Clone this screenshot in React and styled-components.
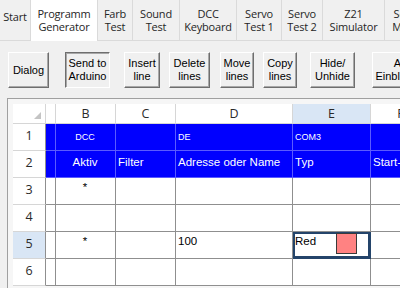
import React from "react";
import styled, { createGlobalStyle, css } from "styled-components";

const GlobalStyle = createGlobalStyle`
  html, body {
    margin: 0;
    padding: 0;
  }
  body {
    width: 400px;
    height: 288px;
    overflow: hidden;
    background: #f0f0f0;
    font-family: "Liberation Sans", Arial, sans-serif;
  }
`;

const Window = styled.div`
  width: 400px;
  height: 288px;
  overflow: hidden;
  display: flex;
  flex-direction: column;
`;

const TabBar = styled.div`
  display: flex;
  flex-shrink: 0;
  height: 40px;
  border-bottom: 1px solid #dadada;
  background: #f0f0f0;
`;

const Tab = styled.div`
  flex: 0 0 ${(p) => p.$w}px;
  box-sizing: border-box;
  height: ${(p) => (p.$active ? 41 : 40)}px;
  padding-top: ${(p) => (p.$single ? 10 : 7)}px;
  text-align: center;
  white-space: pre-line;
  font-family: "Open Sans", sans-serif;
  font-size: 11px;
  letter-spacing: -0.2px;
  line-height: 13px;
  color: #262626;
  border-right: 1px solid #dadada;
  background: ${(p) => (p.$active ? "#ffffff" : "#f0f0f0")};
`;

const Toolbar = styled.div`
  display: flex;
  align-items: flex-start;
  flex-shrink: 0;
  height: 57px;
  box-sizing: border-box;
  padding-top: 11px;
`;

const ToolButton = styled.button`
  flex: 0 0 ${(p) => p.$w}px;
  margin-left: ${(p) => p.$ml}px;
  height: 36px;
  padding: 0;
  box-sizing: border-box;
  white-space: pre-line;
  font-family: "Liberation Sans", Arial, sans-serif;
  font-size: 11px;
  line-height: 13px;
  color: #000;
  background: #f0f0f0;
  border: 1px solid;
  border-color: #ffffff #6e6e6e #6e6e6e #ffffff;
  box-shadow: inset -1px -1px 0 #a8a8a8;
  ${(p) =>
    p.$pressed &&
    css`
      border-color: #6e6e6e #ffffff #ffffff #6e6e6e;
      box-shadow: inset 1px 1px 0 #a8a8a8;
    `}
`;

const Sheet = styled.div`
  flex: 1;
  margin-left: 7px;
  padding: 5px 0 0 5px;
  border-top: 1px solid #a0a0a0;
  border-left: 1px solid #a0a0a0;
  background: #f6f6f6;
  overflow: hidden;
`;

const Grid = styled.div`
  display: grid;
  grid-template-columns: 33px 10px 60px 60px 117px 78px 60px;
  grid-template-rows: 20px repeat(6, 27px);
`;

const Corner = styled.div`
  position: relative;
  box-sizing: border-box;
  background: #fff;
  border-right: 1px solid #d6d6d6;
  border-bottom: 1px solid #d6d6d6;

  &::after {
    content: "";
    position: absolute;
    right: 4px;
    bottom: 4px;
    border-left: 7px solid transparent;
    border-bottom: 7px solid #c4c4c4;
  }
`;

const ColHead = styled.div`
  box-sizing: border-box;
  display: flex;
  align-items: center;
  justify-content: center;
  background: ${(p) => (p.$active ? "#d9e6f5" : "#ffffff")};
  border-right: 1px solid #d6d6d6;
  border-bottom: 1px solid #d6d6d6;
  font-family: "Open Sans", sans-serif;
  font-size: 12.5px;
  color: #2a2a2a;
`;

const RowHead = styled.div`
  box-sizing: border-box;
  padding-top: 4px;
  text-align: center;
  background: ${(p) => (p.$active ? "#d9e6f5" : "#ffffff")};
  border-right: 1px solid #8f8f8f;
  border-bottom: 1px solid #d6d6d6;
  font-family: "Open Sans", sans-serif;
  font-size: 12.5px;
  line-height: 16px;
  color: #2a2a2a;
`;

const Cell = styled.div`
  box-sizing: border-box;
  display: flex;
  align-items: flex-start;
  justify-content: ${(p) => (p.$center ? "center" : "space-between")};
  padding: 2px ${(p) => (p.$swatch ? 13 : 3)}px 0 2px;
  overflow: hidden;
  white-space: nowrap;
  background: #ffffff;
  border-right: 1px solid #8f8f8f;
  border-bottom: 1px solid #8f8f8f;
  font-size: 11.5px;
  line-height: 14px;
  color: #000;

  ${(p) =>
    p.$blue &&
    css`
      background: #0000ff;
      color: #ffffff;
      border-color: #5a5aff;
      padding-top: 4px;
    `}

  ${(p) =>
    p.$small &&
    css`
      font-size: 9px;
      padding-top: 6px;
    `}

  ${(p) =>
    p.$selected &&
    css`
      border-color: #24446a;
      box-shadow: inset 0 0 0 2px #24446a;
    `}
`;

const Swatch = styled.span`
  flex: 0 0 21px;
  height: 21px;
  margin-top: -1px;
  box-sizing: border-box;
  background: ${(p) => p.$color};
  border: 1px solid #3a3a3a;
`;

const tabs = [
  { label: "Start", w: 31, single: true },
  { label: "Programm\nGenerator", w: 67, active: true },
  { label: "Farb\nTest", w: 35 },
  { label: "Sound\nTest", w: 47 },
  { label: "DCC\nKeyboard", w: 57 },
  { label: "Servo\nTest 1", w: 45 },
  { label: "Servo\nTest 2", w: 41 },
  { label: "Z21\nSimulator", w: 62 },
  { label: "Servo\nMotor", w: 46 },
];

const buttons = [
  { label: "Dialog", w: 41, ml: 8 },
  { label: "Send to\nArduino", w: 45, ml: 16, pressed: true },
  { label: "Insert\nline", w: 36, ml: 14 },
  { label: "Delete\nlines", w: 41, ml: 9 },
  { label: "Move\nlines", w: 34, ml: 10 },
  { label: "Copy\nlines", w: 34, ml: 9 },
  { label: "Hide/\nUnhide", w: 45, ml: 13 },
  { label: "Alle\nEinblenden", w: 62, ml: 17 },
];

const columns = ["", "B", "C", "D", "E", "F"];
const activeCol = 4;

const rows = [
  { n: 1, blue: true, small: true, cells: ["", "DCC", "", "DE", "COM3", ""] },
  { n: 2, blue: true, cells: ["", "Aktiv", "Filter", "Adresse oder Name", "Typ", "Start-Zeit"] },
  { n: 3, cells: ["", "*", "", "", "", ""] },
  { n: 4, cells: ["", "", "", "", "", ""] },
  { n: 5, active: true, cells: ["", "*", "", "100", "Red", ""], swatchCol: 4, swatch: "#ff8282" },
  { n: 6, cells: ["", "", "", "", "", ""] },
];

export default function App() {
  return (
    <Window>
      <GlobalStyle />
      <TabBar>
        {tabs.map((t) => (
          <Tab key={t.label} $w={t.w} $active={t.active} $single={t.single}>
            {t.label}
          </Tab>
        ))}
      </TabBar>

      <Toolbar>
        {buttons.map((b) => (
          <ToolButton key={b.label} $w={b.w} $ml={b.ml} $pressed={b.pressed}>
            {b.label}
          </ToolButton>
        ))}
      </Toolbar>

      <Sheet>
        <Grid>
          <Corner />
          {columns.map((c, i) => (
            <ColHead key={"h" + i} $active={i === activeCol}>
              {c}
            </ColHead>
          ))}

          {rows.map((r) => (
            <React.Fragment key={r.n}>
              <RowHead $active={r.active}>{r.n}</RowHead>
              {r.cells.map((v, i) => {
                const hasSwatch = r.swatchCol === i;
                return (
                  <Cell
                    key={i}
                    $blue={r.blue}
                    $small={r.small}
                    $center={i === 1}
                    $selected={hasSwatch}
                    $swatch={hasSwatch}
                  >
                    {v}
                    {hasSwatch && <Swatch $color={r.swatch} />}
                  </Cell>
                );
              })}
            </React.Fragment>
          ))}
        </Grid>
      </Sheet>
    </Window>
  );
}
